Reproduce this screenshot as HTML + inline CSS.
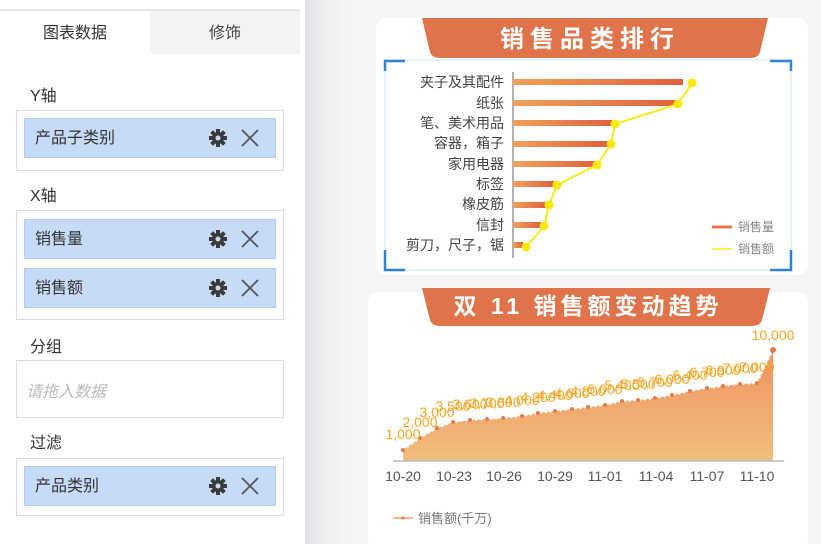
<!DOCTYPE html>
<html><head><meta charset="utf-8"><style>
*{margin:0;padding:0;box-sizing:border-box}
body{width:821px;height:544px;overflow:hidden;background:#f4f5f6;font-family:"Liberation Sans","Noto Sans CJK SC",sans-serif;position:relative;color:#333}
.a{position:absolute}
.left{left:0;top:0;width:305px;height:544px;background:#fff}
.strip{left:305px;top:0;width:42px;height:544px;background:linear-gradient(90deg,#e2e3e6,#eceef0 40%,#f4f5f6)}
.lbl{font-size:16px;color:#333}
.box{border:1px solid #dcdcdc;background:#fff;left:16px;width:268px}
.item{left:24px;width:252px;height:40px;background:#c6dbf8;border:1px solid #b2cdf0;font-size:16px;line-height:40px;padding-left:10px;color:#333}
</style></head><body>
<div class="a left"></div>
<div class="a strip"></div>
<div class="a" style="left:0;top:9px;width:300px;height:2px;background:#e6e6e6"></div>
<div class="a" style="left:0;top:11px;width:150px;height:43px;background:#fff;font-size:16px;line-height:45px;text-align:center">图表数据</div>
<div class="a" style="left:150px;top:11px;width:150px;height:43px;background:#f3f3f3;font-size:16px;line-height:45px;text-align:center;color:#444;border-bottom-left-radius:3px">修饰</div>

<div class="a lbl" style="left:30px;top:82px">Y轴</div>
<div class="a box" style="top:110px;height:61px"></div>
<div class="a item" style="top:118px">产品子类别</div>
<div class="a lbl" style="left:30px;top:182px">X轴</div>
<div class="a box" style="top:210px;height:110px"></div>
<div class="a item" style="top:219px">销售量</div>
<div class="a item" style="top:268px">销售额</div>
<div class="a lbl" style="left:30px;top:333px">分组</div>
<div class="a box" style="top:360px;height:58px"></div>
<div class="a" style="left:26px;top:378px;font-size:16px;color:#bbb;font-style:italic">请拖入数据</div>
<div class="a lbl" style="left:30px;top:429px">过滤</div>
<div class="a box" style="top:458px;height:58px"></div>
<div class="a item" style="top:466px">产品类别</div>

<svg class="a" style="left:0;top:0" width="305" height="544">
<defs>
<g id="ic">
<g fill="#3a3a3a"><circle cx="0" cy="0" r="6"/>
<rect x="-2" y="-9" width="4" height="18"/><rect x="-9" y="-2" width="18" height="4"/>
<rect x="-2" y="-9" width="4" height="18" transform="rotate(45)"/><rect x="-2" y="-9" width="4" height="18" transform="rotate(-45)"/></g>
<circle cx="0" cy="0" r="2.5" fill="#c6dbf8"/>
<path d="M24 -8 L40 8 M40 -8 L24 8" stroke="#555" stroke-width="1.8"/>
</g></defs>
<use href="#ic" x="218" y="138"/>
<use href="#ic" x="218" y="239"/>
<use href="#ic" x="218" y="288"/>
<use href="#ic" x="218" y="486"/>
</svg>

<svg class="a" style="left:0;top:0" width="821" height="544" font-family="Liberation Sans,Noto Sans CJK SC,sans-serif">
<defs>
<linearGradient id="bar" x1="0" x2="1"><stop offset="0" stop-color="#f0a25a"/><stop offset="1" stop-color="#e0603c"/></linearGradient>
<linearGradient id="ar" x1="0" y1="0" x2="0" y2="1"><stop offset="0" stop-color="#ee9461"/><stop offset="1" stop-color="#f2be7c"/></linearGradient>
</defs>
<rect x="376" y="18" width="432" height="257" rx="10" fill="#fff"/>
<path d="M422 18 H768 L760 52 Q758 58 750 58 H440 Q432 58 430 52 Z" fill="#e07349"/>
<text x="590" y="47" text-anchor="middle" font-size="24" font-weight="bold" fill="#fff" letter-spacing="6">销售品类排行</text>
<rect x="385" y="60" width="406" height="210" fill="none" stroke="#cfe3f8" stroke-width="1"/>
<g stroke="#2c83d8" stroke-width="2.5" fill="none">
<path d="M385 71 V61 H405"/><path d="M770 61 H791 V71"/><path d="M385 250 V270 H405"/><path d="M770 270 H791 V250"/></g>
<line x1="513" y1="72" x2="513" y2="258" stroke="#666" stroke-width="1"/>
<g fill="url(#bar)">
<rect x="513" y="79" width="170" height="6"/><rect x="513" y="100" width="162" height="6"/><rect x="513" y="120" width="99" height="6"/>
<rect x="513" y="141" width="95" height="6"/><rect x="513" y="161" width="84" height="6"/><rect x="513" y="181" width="41" height="6"/>
<rect x="513" y="202" width="33" height="6"/><rect x="513" y="222" width="28" height="6"/><rect x="513" y="242" width="10" height="6"/></g>
<polyline points="692,83 678,104 615,124 611,144 597,165 557,185 549,205 544,226 526,247" fill="none" stroke="#f7ea16" stroke-width="2"/>
<g fill="#f9ea0c"><circle cx="692" cy="83" r="4.5"/><circle cx="678" cy="104" r="4.5"/><circle cx="615" cy="124" r="4.5"/><circle cx="611" cy="144" r="4.5"/><circle cx="597" cy="165" r="4.5"/><circle cx="557" cy="185" r="4.5"/><circle cx="549" cy="205" r="4.5"/><circle cx="544" cy="226" r="4.5"/><circle cx="526" cy="247" r="4.5"/></g>
<g font-size="14" fill="#444" text-anchor="end">
<text x="504" y="87">夹子及其配件</text><text x="504" y="108">纸张</text><text x="504" y="128">笔、美术用品</text><text x="504" y="148">容器，箱子</text><text x="504" y="169">家用电器</text><text x="504" y="189">标签</text><text x="504" y="209">橡皮筋</text><text x="504" y="230">信封</text><text x="504" y="250">剪刀，尺子，锯</text></g>
<line x1="712" y1="227" x2="732" y2="227" stroke="#e8764a" stroke-width="3"/>
<line x1="712" y1="249" x2="732" y2="249" stroke="#f7ea16" stroke-width="1.5"/>
<g font-size="12" fill="#888"><text x="738" y="231">销售量</text><text x="738" y="253">销售额</text></g>

<rect x="368" y="292" width="440" height="260" rx="10" fill="#fff"/>
<text x="773" y="340" text-anchor="middle" font-size="14" fill="#f5a623">10,000</text>
<path d="M422 288 H770 L762 320 Q760 326 752 326 H440 Q432 326 430 320 Z" fill="#e07349"/>
<text x="588" y="314" text-anchor="middle" font-size="23" font-weight="bold" fill="#fff" letter-spacing="4">双 11 销售额变动趋势</text>
<path d="M403 461 L403 450 420 438 437 428 453 422 470 420 487 419 503 418 522 416 538 413 555 411 572 409 588 407 605 405 622 401 638 400 655 398 672 395 690 391 707 388 723 386 740 384 757 383 773 350 L773 461 Z" fill="url(#ar)"/>
<polyline points="403,450 420,438 437,428 453,422 470,420 487,419 503,418 522,416 538,413 555,411 572,409 588,407 605,405 622,401 638,400 655,398 672,395 690,391 707,388 723,386 740,384 757,383 773,350" fill="none" stroke="#fff" stroke-width="2" stroke-dasharray="2 3"/>
<g fill="#e8794c"><circle cx="403" cy="450" r="2"/><circle cx="420" cy="438" r="2"/><circle cx="437" cy="428" r="2"/><circle cx="453" cy="422" r="2"/><circle cx="470" cy="420" r="2"/><circle cx="487" cy="419" r="2"/><circle cx="503" cy="418" r="2"/><circle cx="522" cy="416" r="2"/><circle cx="538" cy="413" r="2"/><circle cx="555" cy="411" r="2"/><circle cx="572" cy="409" r="2"/><circle cx="588" cy="407" r="2"/><circle cx="605" cy="405" r="2"/><circle cx="622" cy="401" r="2"/><circle cx="638" cy="400" r="2"/><circle cx="655" cy="398" r="2"/><circle cx="672" cy="395" r="2"/><circle cx="690" cy="391" r="2"/><circle cx="707" cy="388" r="2"/><circle cx="723" cy="386" r="2"/><circle cx="740" cy="384" r="2"/><circle cx="757" cy="383" r="2"/><circle cx="773" cy="350" r="3"/></g>
<g font-size="14" fill="#f5a623" text-anchor="middle">
<text x="403" y="439">1,000</text><text x="420" y="427">2,000</text><text x="437" y="417">3,000</text><text x="453" y="411">3,500</text><text x="470" y="409">3,600</text><text x="487" y="408">3,700</text><text x="503" y="407">3,800</text><text x="522" y="405">4,000</text><text x="538" y="402">4,200</text><text x="555" y="400">4,400</text><text x="572" y="398">4,600</text><text x="588" y="396">4,800</text><text x="605" y="394">5,000</text><text x="622" y="390">5,400</text><text x="638" y="389">5,500</text><text x="655" y="387">5,700</text><text x="672" y="384">6,000</text><text x="690" y="380">6,400</text><text x="707" y="377">6,700</text><text x="723" y="375">6,900</text><text x="740" y="373">7,000</text><text x="757" y="372">7,000</text></g>
<line x1="393" y1="461" x2="784" y2="461" stroke="#b8bcc0" stroke-width="1.5"/>
<g font-size="14" fill="#555" text-anchor="middle">
<text x="403" y="481">10-20</text><text x="454" y="481">10-23</text><text x="504" y="481">10-26</text><text x="555" y="481">10-29</text><text x="605" y="481">11-01</text><text x="656" y="481">11-04</text><text x="707" y="481">11-07</text><text x="757" y="481">11-10</text></g>
<line x1="393" y1="518" x2="413" y2="518" stroke="#f0a070" stroke-width="1.5"/><circle cx="403" cy="518" r="1.5" fill="#e8794c"/>
<text x="418" y="523" font-size="13" fill="#777">销售额(千万)</text>
</svg>
</body></html>
